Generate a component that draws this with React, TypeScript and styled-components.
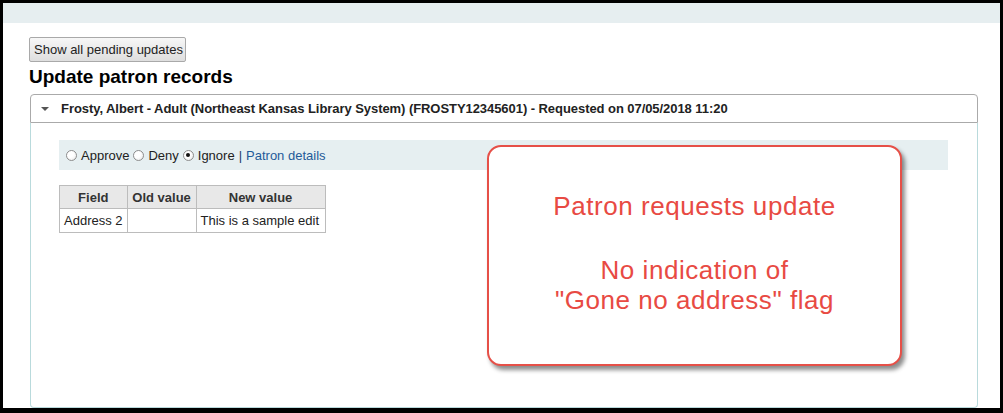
import React from "react";
import styled, { createGlobalStyle } from "styled-components";

const GlobalStyle = createGlobalStyle`
  html, body {
    margin: 0;
    padding: 0;
    background: #000000;
  }
  body {
    font-family: "Liberation Sans", Arial, sans-serif;
    font-size: 13px;
    color: #222222;
  }
`;

type Change = {
  field: string;
  oldValue: string;
  newValue: string;
};

const changes: Change[] = [{ field: "Address 2", oldValue: "", newValue: "This is a sample edit" }];

export default function App() {
  return (
    <>
      <GlobalStyle />
      <Frame>
        <Page>
          <TopBar />
          <Content>
            <Button type="button">Show all pending updates</Button>
            <Title>Update patron records</Title>

            <Panel>
              <PanelHeader>
                <Caret />
                <HeaderText>
                  Frosty, Albert - Adult (Northeast Kansas Library System) (FROSTY12345601) - Requested on
                  07/05/2018 11:20
                </HeaderText>
              </PanelHeader>
              <PanelBody>
                <ActionBar>
                  <Radio />
                  <RadioLabel>Approve</RadioLabel>
                  <Radio />
                  <RadioLabel>Deny</RadioLabel>
                  <Radio checked />
                  <RadioLabel>Ignore</RadioLabel>
                  <Separator>|</Separator>
                  <Link href="#">Patron details</Link>
                </ActionBar>

                <Table>
                  <thead>
                    <tr>
                      <Th width={67}>Field</Th>
                      <Th width={69}>Old value</Th>
                      <Th width={129}>New value</Th>
                    </tr>
                  </thead>
                  <tbody>
                    {changes.map((c) => (
                      <tr key={c.field}>
                        <Td>{c.field}</Td>
                        <Td>{c.oldValue}</Td>
                        <Td>{c.newValue}</Td>
                      </tr>
                    ))}
                  </tbody>
                </Table>
              </PanelBody>
            </Panel>
          </Content>

          <Callout>
            <CalloutLine gap={34}>Patron requests update</CalloutLine>
            <CalloutLine>No indication of</CalloutLine>
            <CalloutLine>"Gone no address" flag</CalloutLine>
          </Callout>
        </Page>
      </Frame>
    </>
  );
}

const Frame = styled.div`
  box-sizing: border-box;
  width: 1003px;
  height: 413px;
  padding: 3px 3px 5px 3px;
  background: #000000;
`;

const Page = styled.div`
  position: relative;
  height: 405px;
  background: #ffffff;
  overflow: hidden;
`;

const TopBar = styled.div`
  height: 20px;
  background: #e6eef0;
`;

const Content = styled.div`
  padding: 14px 0 0 26px;
`;

const Button = styled.button`
  box-sizing: border-box;
  display: block;
  height: 25px;
  width: 157px;
  margin: 0;
  padding: 0 4px;
  border: 1px solid #a9a9a9;
  border-radius: 2px;
  background: linear-gradient(#f7f7f7, #dedede);
  font-family: "Liberation Sans", Arial, sans-serif;
  font-size: 13px;
  color: #222222;
  white-space: nowrap;
`;

const Title = styled.h1`
  margin: 4px 0 6px 0;
  font-size: 19px;
  line-height: 22px;
  font-weight: bold;
  color: #000000;
`;

const Panel = styled.div`
  width: 948px;
  margin-left: 1px;
`;

const PanelHeader = styled.div`
  box-sizing: border-box;
  height: 29px;
  display: flex;
  align-items: center;
  padding-left: 10px;
  border: 1px solid #aaaaaa;
  border-radius: 4px 4px 0 0;
  background: #ffffff;
`;

const Caret = styled.span`
  width: 0;
  height: 0;
  margin-right: 12px;
  border-left: 4px solid transparent;
  border-right: 4px solid transparent;
  border-top: 4px solid #555555;
`;

const HeaderText = styled.span`
  font-size: 13px;
  font-weight: bold;
  letter-spacing: -0.06px;
  color: #222222;
  white-space: nowrap;
`;

const PanelBody = styled.div`
  box-sizing: border-box;
  height: 285px;
  padding: 17px 29px 0 28px;
  border: 1px solid #b9dadc;
  border-top: none;
  border-radius: 0 0 4px 4px;
`;

const ActionBar = styled.div`
  height: 30px;
  display: flex;
  align-items: center;
  padding-left: 7px;
  background: #e6eff1;
  font-size: 13px;
`;

const Radio = styled.span<{ checked?: boolean }>`
  box-sizing: border-box;
  position: relative;
  width: 11px;
  height: 11px;
  margin-right: 4px;
  border: 1px solid #8d8d8d;
  border-radius: 50%;
  background: radial-gradient(circle at 35% 35%, #ffffff 40%, #e4e4e4 100%);

  &::after {
    content: "";
    display: ${(p) => (p.checked ? "block" : "none")};
    position: absolute;
    left: 2.5px;
    top: 2.5px;
    width: 4px;
    height: 4px;
    border-radius: 50%;
    background: #111111;
  }
`;

const RadioLabel = styled.span`
  margin-right: 4px;
  color: #222222;
`;

const Separator = styled.span`
  margin-right: 4px;
  color: #1d3d6b;
`;

const Link = styled.a`
  color: #1f5b99;
  text-decoration: none;
`;

const Table = styled.table`
  margin-top: 15px;
  border-collapse: collapse;
  font-size: 13px;
`;

const Th = styled.th<{ width: number }>`
  box-sizing: border-box;
  width: ${(p) => p.width}px;
  height: 23px;
  padding: 0 4px;
  border: 1px solid #bcbcbc;
  background: #e8e8e8;
  font-weight: bold;
  color: #333333;
  text-align: center;
  white-space: nowrap;
`;

const Td = styled.td`
  height: 23px;
  padding: 0 4px;
  border: 1px solid #bcbcbc;
  color: #222222;
  white-space: nowrap;
`;

const Callout = styled.div`
  box-sizing: border-box;
  position: absolute;
  left: 484px;
  top: 142px;
  width: 415px;
  height: 221px;
  padding-top: 44px;
  border: 2px solid #e65048;
  border-radius: 14px;
  background: #ffffff;
  box-shadow: 3px 4px 4px rgba(0, 0, 0, 0.45);
  text-align: center;
`;

const CalloutLine = styled.div<{ gap?: number }>`
  margin-bottom: ${(p) => p.gap ?? 0}px;
  font-size: 26px;
  line-height: 30px;
  letter-spacing: 0.55px;
  color: #e84a43;
`;
